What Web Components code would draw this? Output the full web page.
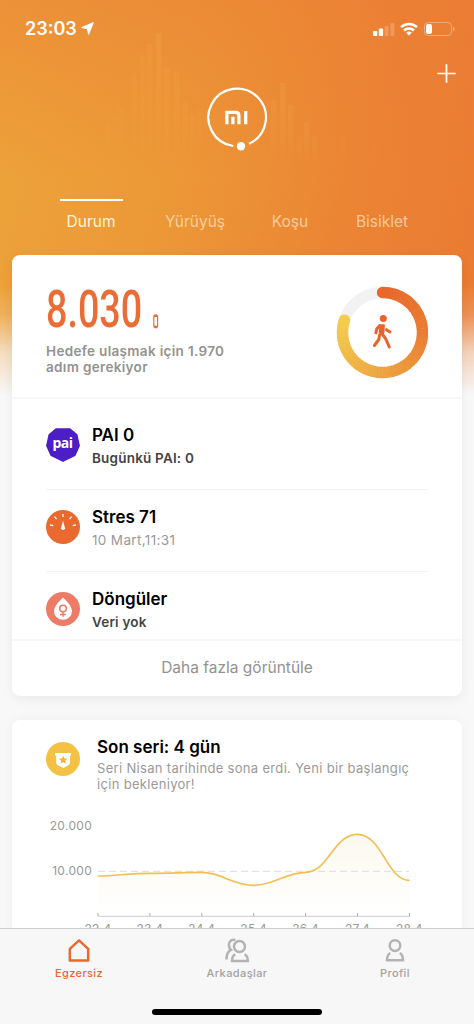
<!DOCTYPE html>
<html lang="tr">
<head>
<meta charset="utf-8">
<title>Mi Fit</title>
<style>
  html, body {
    margin: 0;
    height: 100%;
    overflow: hidden;
    background: #f8f8f8;
    font-family: Inter, "Noto Sans", sans-serif;
    color: #000;
  }
</style>
</head>
<body>
<fit-app></fit-app>

<script>
// shared by all elements: attach an open root and fill it from a template
class FitElement extends HTMLElement {
  constructor() {
    super();
    this._root = this.attachShadow({ mode: 'open' });
  }
  render(html) {
    const template = document.createElement('template');
    template.innerHTML = html;
    this._root.appendChild(template.content.cloneNode(true));
  }
}

// status bar
class FitStatus extends FitElement {
  connectedCallback() {
    this.render(`
      <style>
        :host { display: flex; align-items: center; height: 55px; padding: 1px 19px 0 25px; color: #fff; }
        .time { font-size: 18px; font-weight: 600; letter-spacing: 0; line-height: 24px; }
        .arrow { margin: 0 auto 0 4px; }
        .wifi { margin: 0 6px 0 5px; }
        svg { display: block; }
      </style>
      <span class="time"><slot></slot></span>
      <svg class="arrow" width="13" height="13" viewBox="0 0 13 13"><path d="M12.4.6 7.6 12.4 6.300 6.800.4 5.600z" fill="#fff" stroke="#fff" stroke-width=".9" stroke-linejoin="round"/></svg>
      <svg width="22" height="14" viewBox="0 0 22 14" fill="#fff">
        <rect x="0" y="9" width="4.3" height="5" rx="1"/>
        <rect x="5.8" y="6.5" width="4.3" height="7.5" rx="1"/>
        <rect x="11.6" y="4" width="4" height="10" rx="1" opacity=".2"/>
        <rect x="17.4" y="1" width="4" height="13" rx="1" opacity=".2"/>
      </svg>
      <svg class="wifi" width="18" height="14" viewBox="0 0 18 14" fill="none" stroke="#fff" stroke-width="2.5">
        <path d="M1 5.2a11.4 11.4 0 0 1 16 0M4 8.5a7.1 7.1 0 0 1 10 0"/>
        <path d="M9 13.6 6.2 10.8a4 4 0 0 1 5.6 0z" fill="#fff" stroke="none"/>
      </svg>
      <svg width="31" height="14" viewBox="0 0 31 14">
        <rect x=".5" y=".5" width="27" height="13" rx="3.8" fill="none" stroke="#fff" stroke-opacity=".35"/>
        <rect x="2" y="2" width="6" height="10" rx="2" fill="#fff"/>
        <path d="M29 4.8q1.6.5 1.6 2.2T29 9.2z" fill="#fff" opacity=".4"/>
      </svg>
    `);
  }
}
window.customElements.define('fit-status', FitStatus);

// orange header with the band badge
class FitHeader extends FitElement {
  connectedCallback() {
    // x, top, opacity of each bar of the backdrop
    const bars = [
      [105, 122, .06], [112, 114, .07], [118, 107, .09], [132, 74, .1], [140, 55, .14],
      [147, 44, .17], [156, 33, .22], [164, 68, .18], [174, 72, .17], [182, 102, .12],
      [190, 114, .1], [197, 109, .08], [271, 100, .14], [280, 83, .22], [288, 105, .17],
      [297, 137, .11], [304, 122, .17], [312, 136, .11], [340, 138, .05], [372, 144, .05]
    ];
    this.render(`
      <style>
        :host { display: block; position: relative; height: 255px; }
        .back {
          position: absolute; inset: 0 0 auto; height: 400px;
          background:
            linear-gradient(180deg, rgba(235,122,52,.45) 0, rgba(235,122,52,0) 180px),
            linear-gradient(104deg, #eda43a 0, #ec9837 38%, #eb8434 70%, #ea7932 100%);
          -webkit-mask-image: linear-gradient(#000 285px, rgba(0,0,0,.82) 315px, rgba(0,0,0,.3) 353px, transparent 395px);
          mask-image: linear-gradient(#000 285px, rgba(0,0,0,.82) 315px, rgba(0,0,0,.3) 353px, transparent 395px);
        }
        .front { position: relative; display: flex; flex-direction: column; height: 255px; }
        .badge-row { display: grid; grid-template-columns: 1fr 62px 1fr; height: 142px; }
        .badge { margin-top: 31px; }
        .plus { justify-self: end; margin: 8px 18px 0 0; }
        svg { display: block; }
      </style>
      <div class="back">
        <svg width="474" height="200" viewBox="0 0 474 200">
          <defs><linearGradient id="fade" x1="0" y1="0" x2="0" y2="1">
            <stop offset="0" stop-color="#f6b044"/><stop offset=".45" stop-color="#f6b044" stop-opacity=".65"/><stop offset="1" stop-color="#f6b044" stop-opacity="0"/>
          </linearGradient></defs>
          ${bars.map(([x, y, o]) => `<rect x="${x}" y="${y}" width="5.5" height="${165 - y}" fill="url(#fade)" opacity="${o}"/>`).join('')}
        </svg>
      </div>
      <div class="front">
        <slot name="status"></slot>
        <div class="badge-row">
          <span></span>
          <svg class="badge" width="62" height="66" viewBox="0 0 62 66">
            <path d="M27.4 59A28.8 28.8 0 1 1 43 56.7" fill="none" stroke="#fff" stroke-width="2.2"/>
            <circle cx="35" cy="59.3" r="4.2" fill="#fff"/>
            <g fill="none" stroke="#fff" stroke-width="3.3">
              <path d="M20.9 37.3V25.4h8.7q3.3 0 3.3 3.3v8.6M26.9 29.7v7.6M39.7 23.9v13.4"/>
            </g>
          </svg>
          <svg class="plus" width="19" height="19" viewBox="0 0 19 19"><path d="M9.5.3v18.4M.3 9.5h18.4" stroke="#fff" stroke-width="1.7"/></svg>
        </div>
        <slot name="tabs"></slot>
      </div>
    `);
  }
}
window.customElements.define('fit-header', FitHeader);

class FitTab extends FitElement {
  connectedCallback() {
    this.render(`
      <style>
        :host {
          display: flex; flex-direction: column; align-items: center;
          font-size: 15.5px; line-height: 20px; color: rgba(255,235,205,.68);
        }
        :host::before { content: ''; width: 63px; height: 2px; margin-bottom: 11px; }
        :host([active]) { color: #fff3df; }
        :host([active])::before { background: #fff; }
      </style>
      <slot></slot>
    `);
  }
}
window.customElements.define('fit-tab', FitTab);

class FitCard extends FitElement {
  connectedCallback() {
    this.render(`
      <style>
        :host {
          display: block; margin: 0 12px; background: #fff; border-radius: 8px;
          box-shadow: 0 3px 12px rgba(0,0,0,.06); position: relative; overflow: hidden;
        }
      </style>
      <slot></slot>
    `);
  }
}
window.customElements.define('fit-card', FitCard);

// today's steps and the goal ring
class FitSteps extends FitElement {
  connectedCallback() {
    const value = Number(this.getAttribute('value'));
    this.render(`
      <style>
        :host { display: flex; justify-content: space-between; height: 142px; padding: 0 34px; border-bottom: 2px solid #f7f7f7; }
        .count { display: flex; height: 54px; margin-top: 27px; }
        .number { width: 95px; font: 500 52px/56px Roboto, sans-serif; color: #e96d35; white-space: nowrap; }
        .number span { display: inline-block; transform: scaleX(.725); transform-origin: 0 50%; }
        .band { margin: 32px 0 0 12px; }
        p { margin: 7px 0 0; width: 200px; font-size: 13.5px; font-weight: 600; line-height: 16px; letter-spacing: .33px; color: #929292; }
        .ring { margin-top: 31px; }
      </style>
      <div>
        <div class="count">
          <div class="number"><span><slot name="count"></slot></span></div>
          <svg class="band" width="6" height="15" viewBox="0 0 6 15"><rect x=".8" y="1.4" width="3.800" height="12" rx="1.3" fill="#fff" stroke="#e96d35" stroke-width="1.2"/><path d="M1.2 1.8h3M1.2 13h3" stroke="#e96d35" stroke-width="2.6"/></svg>
        </div>
        <p><slot></slot></p>
      </div>
      <svg class="ring" width="92" height="93" viewBox="0 0 92 93">
        <circle cx="46.5" cy="46.5" r="40" fill="none" stroke="#f2f2f2" stroke-width="11.4"/>
        <g id="arc" fill="none" stroke-width="11.4"></g>
        <g fill="#e9632c" stroke="#e9632c" stroke-linecap="round" stroke-linejoin="round">
          <circle cx="47.3" cy="32.5" r="3.5" stroke="none"/>
          <path d="M44.6 39.4h3.2l-.6 8-3.4-.8z" stroke-width="2.2"/>
          <path d="M43.8 39.6 40.8 42.800 39.9 46.800M50.5 43.700 54 46M43.600 49l-.8 4.500-4.400 6M45.8 47.5l3.800 5.200 3.700 8.300" fill="none" stroke-width="3"/>
        </g>
      </svg>
    `);
    this._arc(value);
  }

  // the colour runs along the arc, so it is built from short pieces
  _arc(value) {
    const stops = [[0, [232, 103, 42]], [.32, [234, 125, 49]], [.63, [237, 165, 64]], [1, [243, 205, 78]]];
    const total = value * 360;
    const at = deg => {
      const a = (deg - 90) * Math.PI / 180;
      return `${(46.5 + 40 * Math.cos(a)).toFixed(2)} ${(46.5 + 40 * Math.sin(a)).toFixed(2)}`;
    };
    const colour = t => {
      const i = stops.findIndex((s, n) => n > 0 && t <= s[0]);
      const [from, a] = stops[i - 1];
      const [to, b] = stops[i];
      const k = (t - from) / (to - from);
      return `rgb(${a.map((c, n) => Math.round(c + (b[n] - c) * k))})`;
    };
    let html = '';
    for (let i = 0; i < 72; i++) {
      const start = total * i / 72;
      const end = Math.min(total, total * (i + 1) / 72 + .6);
      const cap = i === 0 || i === 71 ? ' stroke-linecap="round"' : '';
      html += `<path d="M${at(start)}A40 40 0 0 1 ${at(end)}" stroke="${colour((i + .5) / 72)}"${cap}/>`;
    }
    this._root.querySelector('#arc').innerHTML = html;
  }
}
window.customElements.define('fit-steps', FitSteps);

// one line of the summary: icon, title, note
class FitRow extends FitElement {
  connectedCallback() {
    const icons = {
      pai: `<path d="M10 1h14l6.800 5.800L33.2 17.800l-4.400 9.600L17 33.200 5.200 27.400.8 17.800 3.200 6.800z" fill="#4c1ec6" stroke="#4c1ec6" stroke-width="1.5" stroke-linejoin="round"/>
        <text x="16.5" y="20.4" text-anchor="middle" fill="#fff" font-family="Open Sans, sans-serif" font-size="14" font-weight="700" letter-spacing="-.5">pai</text>`,
      stress: `<circle cx="17" cy="17" r="17" fill="#ea692f"/>
        <path d="M17 3.9v3.2M8.5 6.6l2 2.6M25.5 6.6l-2 2.6M4 15l3.3.7M30 15l-3.3.7" stroke="#fff" stroke-width="1.3"/>
        <path d="M17 10.5 15 18.3q.3 1.6 2 1.6t2-1.6z" fill="#fff"/>`,
      cycle: `<circle cx="17" cy="17" r="17" fill="#ec7c68"/>
        <path d="M17 5.6q9 8.2 9 13.6a9 8.6 0 0 1-18 0Q8 13.8 17 5.6z" fill="#fff"/>
        <path d="M17 19.8v5M14 22.4h6" stroke="#ec7c68" stroke-width="1.5"/><circle cx="17" cy="16.5" r="3.3" fill="none" stroke="#ec7c68" stroke-width="1.6"/>`
    };
    this.render(`
      <style>
        :host { display: flex; position: relative; height: 82px; margin: 0 34px; box-sizing: border-box; border-bottom: 1px solid #f3f3f3; }
        :host([last]) { height: 67px; border-bottom: 0; }
        svg { margin: 20px 12px 0 0; flex: none; }
        h2 { margin: 16px 0 0; font-size: 17px; line-height: 22px; font-weight: 600; letter-spacing: 0; }
        p { margin: 3px 0 0; font-size: 13.5px; line-height: 18px; font-weight: 600; letter-spacing: .2px; color: #444; }
        :host([muted]) p { font-weight: 400; letter-spacing: .35px; color: #999; }
      </style>
      <svg width="34" height="34" viewBox="0 0 34 34">${icons[this.getAttribute('icon')]}</svg>
      <div>
        <h2><slot></slot></h2>
        <p><slot name="note"></slot></p>
      </div>
    `);
  }
}
window.customElements.define('fit-row', FitRow);

class FitMore extends FitElement {
  connectedCallback() {
    this.render(`
      <style>
        :host { display: block; border-top: 2px solid #f7f7f7; height: 55px; font-size: 15.5px; line-height: 53px; text-align: center; color: #929292; }
      </style>
      <slot></slot>
    `);
  }
}
window.customElements.define('fit-more', FitMore);

// streak text with the chart of the last seven days
class FitStreak extends FitElement {
  connectedCallback() {
    const days = ['22.4', '23.4', '24.4', '25.4', '26.4', '27.4', '28.4'];
    const line = 'M52 60C70 60 82 57.3 104 57.3S136 56.4 156 56.4 186 69.3 207.5 69.3 240 56.3 259.5 56.3C283 56.3 287 18.3 311.5 18.3S341 64.4 363.5 64.4';
    this.render(`
      <style>
        :host { display: block; height: 260px; padding: 0 34px; }
        .top { display: flex; padding-top: 16px; }
        .icon { flex: none; margin: 6px 17px 0 0; }
        h2 { margin: 0; font-size: 17px; line-height: 22px; font-weight: 600; }
        p { margin: 2px 0 0; width: 325px; font-size: 13px; line-height: 16px; letter-spacing: .32px; color: #999; }
        .chart { display: block; overflow: visible; margin-top: 1px; }
        text { font-size: 12px; fill: #999; letter-spacing: .3px; }
      </style>
      <div class="top">
        <svg class="icon" width="34" height="34" viewBox="0 0 34 34">
          <circle cx="17" cy="17" r="17" fill="#f3c245"/>
          <path d="M9 11h16v2.4h-1v7.2q0 2-2 3L17.4 26l-5.2-2.4q-2-1-2-3v-7.2H9z" fill="#fff"/>
          <path d="m17.2 13.800 1.2 2.6 2.9.3-2.1 2 .6 2.9-2.6-1.4-2.6 1.4.6-2.9-2.1-2 2.9-.3z" fill="#f3b52f"/>
        </svg>
        <div>
          <h2><slot></slot></h2>
          <p><slot name="note"></slot></p>
        </div>
      </div>
      <svg class="chart" width="382" height="120" viewBox="0 -23 382 120">
        <defs><linearGradient id="area" x1="0" y1="0" x2="0" y2="1"><stop offset="0" stop-color="#fbf9ee"/><stop offset="1" stop-color="#fff"/></linearGradient></defs>
        <text x="46" y="13.5" text-anchor="end">20.000</text>
        <text x="46" y="58.5" text-anchor="end">10.000</text>
        <path d="${line}V99H52z" fill="url(#area)"/>
        <path d="M52 55.3H363" stroke="#ddd" stroke-dasharray="7 4"/>
        <path d="M52 100.3H364" stroke="#ccc"/>
        ${days.map((day, i) => `<path d="M${52 + i * 51.9} 97v3" stroke="#aaa"/><text x="${52 + i * 51.9}" y="117" text-anchor="middle">${day}</text>`).join('')}
        <path d="${line}" fill="none" stroke="#f3bf55" stroke-width="1.7"/>
      </svg>
    `);
  }
}
window.customElements.define('fit-streak', FitStreak);

// bottom navigation
class FitNavItem extends FitElement {
  connectedCallback() {
    const icons = {
      home: '<path d="M4.8 10.8 14 2.4l9.2 8.4V22.6H4.8z" stroke-linejoin="round"/>',
      friends: '<circle cx="16.5" cy="8.5" r="5.5"/><path d="M12.3 16.3Q9 17.5 9 23h15.8q0-5.5-3.3-6.7M12.3 2.2C8 .8 5.5 4 6 8c.2 1.7.8 2.9 2 3.900-3.100 1.5-4.500 4.800-4.500 9.5"/>',
      profile: '<circle cx="14" cy="7.6" r="5.3"/><path d="M9.3 15.2Q6 16.6 6 22.3h16q0-5.7-3.3-7.1"/>'
    };
    this.render(`
      <style>
        :host { display: flex; flex-direction: column; align-items: center; font-size: 11px; line-height: 14px; font-weight: 500; letter-spacing: .4px; color: #a2a2a2; }
        :host([active]) { color: #e9682f; }
        svg { display: block; margin-bottom: 3px; }
      </style>
      <svg width="28" height="25" viewBox="0 0 28 25" fill="none" stroke="${this.hasAttribute('active') ? '#e9682f' : '#b3b3b3'}" stroke-width="2.5">${icons[this.getAttribute('icon')]}</svg>
      <slot></slot>
    `);
  }
}
window.customElements.define('fit-nav-item', FitNavItem);

class FitApp extends FitElement {
  connectedCallback() {
    this.render(`
      <style>
        :host { display: grid; grid-template-rows: 928px 96px; width: 474px; height: 1024px; overflow: hidden; }
        main { overflow: hidden; min-height: 0; }
        .tabs { display: grid; grid-template-columns: 104px 104px 86px 98px; padding: 1px 0 0 39px; }
        .rows { padding-top: 9px; }
        .second { margin-top: 24px; box-shadow: 0 0 12px rgba(0,0,0,.04); }
        nav { position: relative; box-sizing: border-box; border-top: 1px solid #ccc; background: #f7f7f7; display: flex; flex-direction: column; justify-content: space-between; align-items: center; padding: 9px 0; }
        .items { display: grid; grid-template-columns: repeat(3, 158px); }
        .home { width: 170px; height: 6px; border-radius: 3px; background: #000; }
      </style>
      <main>
        <fit-header>
          <fit-status slot="status">23:03</fit-status>
          <div class="tabs" slot="tabs">
            <fit-tab active>Durum</fit-tab>
            <fit-tab>Yürüyüş</fit-tab>
            <fit-tab>Koşu</fit-tab>
            <fit-tab>Bisiklet</fit-tab>
          </div>
        </fit-header>
        <fit-card>
          <fit-steps value=".8"><span slot="count">8.030</span>Hedefe ulaşmak için 1.970 adım gerekiyor</fit-steps>
          <div class="rows">
            <fit-row icon="pai">PAI 0<span slot="note">Bugünkü PAI: 0</span></fit-row>
            <fit-row icon="stress" muted>Stres 71<span slot="note">10 Mart,11:31</span></fit-row>
            <fit-row icon="cycle" last>Döngüler<span slot="note">Veri yok</span></fit-row>
          </div>
          <fit-more>Daha fazla görüntüle</fit-more>
        </fit-card>
        <fit-card class="second">
          <fit-streak>Son seri: 4 gün<span slot="note">Seri Nisan tarihinde sona erdi. Yeni bir başlangıç için bekleniyor!</span></fit-streak>
        </fit-card>
      </main>
      <nav>
        <div class="items">
          <fit-nav-item icon="home" active>Egzersiz</fit-nav-item>
          <fit-nav-item icon="friends">Arkadaşlar</fit-nav-item>
          <fit-nav-item icon="profile">Profil</fit-nav-item>
        </div>
        <div class="home"></div>
      </nav>
    `);
  }
}
window.customElements.define('fit-app', FitApp);
</script>
</body>
</html>
